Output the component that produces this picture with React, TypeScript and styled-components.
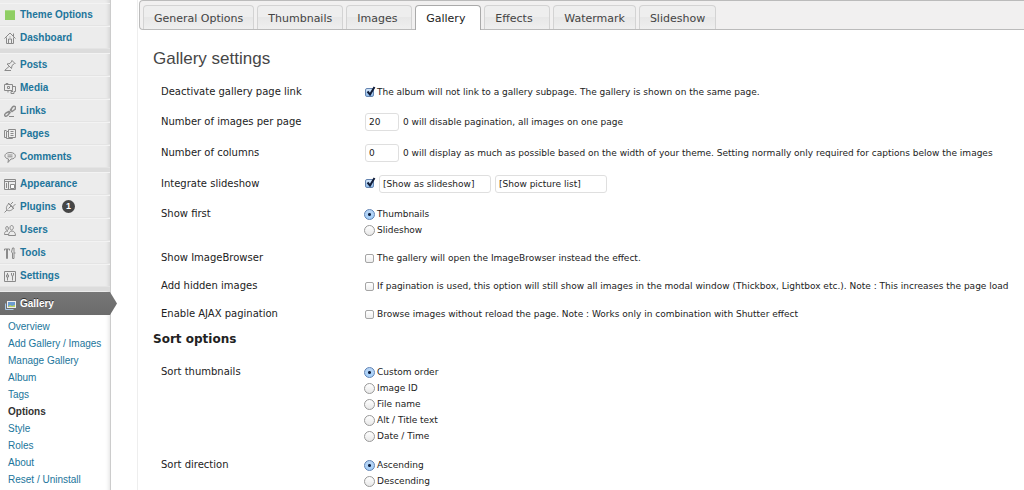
import React from 'react';
import styled, { createGlobalStyle, css } from 'styled-components';

const GlobalStyle = createGlobalStyle`
  * { box-sizing: border-box; }
  body {
    margin: 0;
    background: #fff;
    color: #222;
    font-family: "DejaVu Sans", Verdana, sans-serif;
    font-size: 9px;
    line-height: 16px;
  }
`;

const Page = styled.div`
  display: flex;
  min-height: 100vh;
`;

/* ---------- Sidebar ---------- */

const Sidebar = styled.nav`
  flex: 0 0 111px;
  padding-top: 3px;
  background: #ececec;
  border-right: 1px solid #ccc;
  box-shadow: inset -4px 0 4px -3px rgba(0, 0, 0, 0.12);
  font-family: "Liberation Sans", Arial, sans-serif;
  font-size: 10px;
  display: flex;
  flex-direction: column;
`;

const MenuGroup = styled.ul`
  list-style: none;
  margin: 0;
  padding: 0;
  border-bottom: 4px solid #dcdcdc;
`;

const MenuLink = styled.a`
  display: flex;
  align-items: center;
  gap: 4px;
  height: 23px;
  padding-left: 4px;
  border-top: 1px solid #f3f3f3;
  border-bottom: 1px solid #e4e4e4;
  color: #21759b;
  font-weight: bold;
  text-decoration: none;
  white-space: nowrap;
`;

const MenuIcon = styled.svg`
  flex: none;
  width: 12px;
  height: 12px;
  fill: none;
  stroke: #8a8a8a;
  stroke-width: 1;
`;

const CountBadge = styled.span`
  width: 13px;
  height: 13px;
  margin-left: 2px;
  border-radius: 50%;
  background: #464646;
  color: #fff;
  font-size: 9px;
  line-height: 13px;
  text-align: center;
`;

const CurrentLink = styled(MenuLink)`
  position: relative;
  margin-top: 1px;
  border: 0;
  background: linear-gradient(#777, #6b6b6b);
  color: #fff;
  text-shadow: 0 -1px 0 #333;

  &::after {
    content: "";
    position: absolute;
    left: 100%;
    top: 0;
    width: 7px;
    height: 23px;
    background: linear-gradient(#777, #6b6b6b);
    clip-path: polygon(0 0, 100% 50%, 0 100%);
  }
`;

const SubMenu = styled.ul`
  flex: 1;
  list-style: none;
  margin: 0;
  padding: 3px 0 0 8px;
  background: #fff;
  box-shadow: inset -4px 0 4px -3px rgba(0, 0, 0, 0.12);
  line-height: 17px;
  white-space: nowrap;
`;

const SubLink = styled.a<{ $current?: boolean }>`
  color: ${p => (p.$current ? '#333' : '#21759b')};
  font-weight: ${p => (p.$current ? 'bold' : 'normal')};
  text-decoration: none;
`;

/* ---------- Tabs ---------- */

const Main = styled.main`
  flex: 1;
  min-width: 0;
  margin-left: 26px;
  border-left: 1px solid #eee;
  overflow: hidden;
`;

const TabBar = styled.div`
  display: flex;
  gap: 3px;
  height: 30px;
  margin-left: 1px;
  padding: 4px 0 0 3px;
  border: solid #bbb;
  border-width: 1px 0 1px 1px;
  border-radius: 4px 0 0 4px;
  background: #f1f0f0;
`;

const Tab = styled.button<{ $active?: boolean }>`
  min-width: 66px;
  height: 24px;
  padding: 2px 10px 0;
  border: 1px solid #d3d3d3;
  border-bottom: 0;
  border-radius: 4px 4px 0 0;
  background: linear-gradient(#eee 50%, #e7e7e7 50%, #efefef);
  color: #444;
  font: 11px "DejaVu Sans", Verdana, sans-serif;
  text-align: left;
  white-space: nowrap;
  ${p =>
    p.$active &&
    css`
      height: 25px;
      padding-bottom: 1px;
      border-color: #aaa;
      background: #fff;
      color: #222;
    `}
`;

/* ---------- Form ---------- */

const Title = styled.h2`
  margin: 15px 0 5px 15px;
  color: #464646;
  font: 17px/28px "Liberation Sans", Arial, sans-serif;
`;

const SectionTitle = styled.h3`
  margin: 0 0 7px 15px;
  color: #222;
  font-size: 12px;
  line-height: 22px;
`;

const Row = styled.div`
  display: grid;
  grid-template-columns: 203px 1fr;
  padding: 6px 0 6px 23px;
  white-space: nowrap;
`;

const RadioGroup = styled(Row)`
  padding-top: 7px;
`;

const RowLabel = styled.div<{ $tall?: boolean }>`
  font-size: 10px;
  line-height: ${p => (p.$tall ? 19 : 16)}px;
`;

const Line = styled.div<{ $tall?: boolean }>`
  display: flex;
  align-items: center;
  gap: 4px;
  height: ${p => (p.$tall ? 19 : 16)}px;
`;

const Choice = styled.label`
  display: flex;
  align-items: center;
  gap: 2px;
`;

const Check = styled.input`
  appearance: none;
  flex: none;
  width: 9px;
  height: 9px;
  margin: 0 1px;
  border: 1px solid #a5a5a5;
  border-radius: 2px;
  background: linear-gradient(#fff, #eee);
  display: block;

  &:checked {
    border-color: #6484b0;
    background: linear-gradient(#d5e6f8, #8fbcec);
  }
`;

const CheckWrap = styled.span`
  position: relative;
  display: block;
`;

const Mark = styled.svg`
  position: absolute;
  left: 2px;
  top: -2px;
  width: 10px;
  height: 11px;
  fill: none;
  stroke: #101c38;
  stroke-width: 2;
  pointer-events: none;
`;

const Radio = styled.input`
  appearance: none;
  flex: none;
  width: 11px;
  height: 11px;
  margin: 0;
  border: 1px solid #999;
  border-radius: 50%;
  background: linear-gradient(#fff, #e8e8e8);

  &:checked {
    border-color: #5f83b5;
    background: radial-gradient(circle, #0d1f40 0 1px, transparent 2px), linear-gradient(#b9d5f4, #a5d0fa);
  }
`;

const TextBox = styled.input<{ $wide?: boolean }>`
  width: ${p => (p.$wide ? 112 : 34)}px;
  height: 18px;
  margin-left: ${p => (p.$wide ? 0 : 1)}px;
  padding: 0 3px;
  border: 1px solid #dfdfdf;
  border-radius: 3px;
  background: #fff;
  color: #222;
  font: 9px "DejaVu Sans", Verdana, sans-serif;
`;

/* ---------- Icons ---------- */

const icons: Record<string, React.ReactNode> = {
  theme: (
    <>
      <rect x="1" y="1" width="10" height="10" fill="#8fce63" stroke="none" />
      <path d="M1 1.5h10" stroke="#a9dc86" />
    </>
  ),
  dashboard: <path d="M.5 6.500 6 1l5.500 5.500M2.500 5.500v6h7v-6M9.500 4V1.500M4.500 11.500V7h3v4.500M5.500 5h1" />,
  posts: <path d="M7.500 1 11.500 5M8 2 6 4.500 3 5l4.500 4.500.5-3L10.500 4.500M5 7.500.5 11.500M1 11.500h6" />,
  media: <path d="M.5 2.500h8v6h-8zM2 2.500v-1h2v1M3.500 4.500h2v2h-2zM8.500 4.500h3v5h-1.500v2h-3v-2h2M4 8.500v2" />,
  links: (
    <>
      <path d="M6.500 5 8.500 2q1.500-1.500 2.800-.2 1 1.200-.5 2.700L8 6.500zM5 6.500 2 8Q0 9.500 1 10.800q1.300 1 2.800-.5L6 7.500z" strokeWidth="1.500" />
      <path d="M4.500 8 8 4M5 11.500h5" />
    </>
  ),
  pages: <path d="M4.500 1.500h7v8h-7zM4.500 3.500h-2v7h6v-1M2.500 2.500h-2v7h2M6.500 3.500h3M6.500 5.500h3M6.500 7.500h3" />,
  comments: <path d="M6 1.500c7 0 7 6.500 1 6.500L4 11.500l.5-3.500C-1 7 0 1.500 6 1.500zM3.500 4h5M3.500 5.800h5" />,
  appearance: (
    <>
      <path d="M.5 1.500h11v10H.5zM.5 3.500h11M2.500 5v5M4.500 4v7.500" />
      <path d="M6.500 6.500h4v4h-4z" fill="#fff" />
    </>
  ),
  plugins: <path d="M.5 11.500 3 9M3 9C1.500 6.500 3 4.500 5 2.500L9.500 7C8 9.500 5 10.500 3 9zM6.500 3.500 9 1M8.500 6l3-3M4.500 7.500l3-3M4 2l6 6" />,
  users: <path d="M7.500 1.500c2.500 0 2.500 4 0 4.500-2 0-2-4.500 0-4.500zM3 2.500c1.500 0 2 2.500.5 4-2 0-2.500-4-.5-4zM4.500 11.500c0-6 7-6 7 0zM4.500 10.500h-4c0-3 1.500-4 3.500-3" />,
  tools: <path d="M.5 3.500V2h5v1.500M2.500 2v9.500h1V2M8.500 11.500V6l-1-1 1-4h1.500v10.500zM10 6h1.500" />,
  settings: <path d="M.5 1.500h11v10H.5zM3.500 3v2M2.500 5h2v2h-2zM3.500 7v3.500M8.500 8v2.500M7.500 3v2q1 2.500 2 0V3M8.500 6v2" />,
  gallery: (
    <>
      <path d="M1.500 5.500v6h8" stroke="#a9c9e8" />
      <rect x="3.500" y="3.500" width="8" height="6" fill="#6b9bd0" stroke="#eee" />
      <path d="m4 9 2-2 2 1 3-1v2z" fill="#bcd35f" stroke="none" />
    </>
  ),
};

const menu = [
  [['theme', 'Theme Options'], ['dashboard', 'Dashboard']],
  [['posts', 'Posts'], ['media', 'Media'], ['links', 'Links'], ['pages', 'Pages'], ['comments', 'Comments']],
  [['appearance', 'Appearance'], ['plugins', 'Plugins', '1'], ['users', 'Users'], ['tools', 'Tools'], ['settings', 'Settings']],
];

const subMenu = ['Overview', 'Add Gallery / Images', 'Manage Gallery', 'Album', 'Tags', 'Options', 'Style', 'Roles', 'About', 'Reset / Uninstall'];

const tabs = ['General Options', 'Thumbnails', 'Images', 'Gallery', 'Effects', 'Watermark', 'Slideshow'];

const Icon = ({ name }: { name: string }) => (
  <MenuIcon viewBox="0 0 12 12" aria-hidden="true">{icons[name]}</MenuIcon>
);

const Checkbox = ({ checked, label }: { checked?: boolean; label?: string }) => {
  const [on, setOn] = React.useState(!!checked);
  return (
    <Choice>
      <CheckWrap>
        <Check type="checkbox" checked={on} onChange={() => setOn(!on)} aria-label={label ? undefined : 'Integrate slideshow'} />
        {on && <Mark viewBox="0 0 10 11"><path d="M1.500 5.500 4 8.500 8.500 1" /></Mark>}
      </CheckWrap>
      {label}
    </Choice>
  );
};

const CheckRow = ({ title, text, checked }: { title: string; text: string; checked?: boolean }) => (
  <Row>
    <RowLabel>{title}</RowLabel>
    <Line><Checkbox checked={checked} label={text} /></Line>
  </Row>
);

const NumberRow = ({ id, title, value, text }: { id: string; title: string; value: string; text: string }) => (
  <Row>
    <RowLabel as="label" htmlFor={id} $tall>{title}</RowLabel>
    <Line $tall><TextBox id={id} defaultValue={value} />{text}</Line>
  </Row>
);

const RadioRow = ({ name, title, options }: { name: string; title: string; options: string[] }) => (
  <RadioGroup role="radiogroup" aria-label={title}>
    <RowLabel>{title}</RowLabel>
    <div>
      {options.map((option, i) => (
        <Line key={option}>
          <Choice><Radio type="radio" name={name} defaultChecked={i === 0} />{option}</Choice>
        </Line>
      ))}
    </div>
  </RadioGroup>
);

export default function App() {
  return (
    <Page>
      <GlobalStyle />
      <Sidebar>
        {menu.map((group, i) => (
          <MenuGroup key={i}>
            {group.map(([icon, label, count]) => (
              <li key={label}>
                <MenuLink href="#">
                  <Icon name={icon} />
                  {label}
                  {count && <CountBadge>{count}</CountBadge>}
                </MenuLink>
              </li>
            ))}
          </MenuGroup>
        ))}
        <CurrentLink href="#"><Icon name="gallery" />Gallery</CurrentLink>
        <SubMenu>
          {subMenu.map(item => (
            <li key={item}><SubLink href="#" $current={item === 'Options'}>{item}</SubLink></li>
          ))}
        </SubMenu>
      </Sidebar>
      <Main>
        <TabBar role="tablist">
          {tabs.map(tab => (
            <Tab key={tab} role="tab" aria-selected={tab === 'Gallery'} $active={tab === 'Gallery'}>{tab}</Tab>
          ))}
        </TabBar>
        <Title>Gallery settings</Title>
        <CheckRow checked title="Deactivate gallery page link" text="The album will not link to a gallery subpage. The gallery is shown on the same page." />
        <NumberRow id="images" title="Number of images per page" value="20" text="0 will disable pagination, all images on one page" />
        <NumberRow id="columns" title="Number of columns" value="0" text="0 will display as much as possible based on the width of your theme. Setting normally only required for captions below the images" />
        <Row>
          <RowLabel $tall>Integrate slideshow</RowLabel>
          <Line $tall>
            <Checkbox checked />
            <TextBox $wide aria-label="Slideshow link text" defaultValue="[Show as slideshow]" />
            <TextBox $wide aria-label="Picture list link text" defaultValue="[Show picture list]" />
          </Line>
        </Row>
        <RadioRow name="first" title="Show first" options={['Thumbnails', 'Slideshow']} />
        <CheckRow title="Show ImageBrowser" text="The gallery will open the ImageBrowser instead the effect." />
        <CheckRow title="Add hidden images" text="If pagination is used, this option will still show all images in the modal window (Thickbox, Lightbox etc.). Note : This increases the page load" />
        <CheckRow title="Enable AJAX pagination" text="Browse images without reload the page. Note : Works only in combination with Shutter effect" />
        <SectionTitle>Sort options</SectionTitle>
        <RadioRow name="sort" title="Sort thumbnails" options={['Custom order', 'Image ID', 'File name', 'Alt / Title text', 'Date / Time']} />
        <RadioRow name="direction" title="Sort direction" options={['Ascending', 'Descending']} />
      </Main>
    </Page>
  );
}
